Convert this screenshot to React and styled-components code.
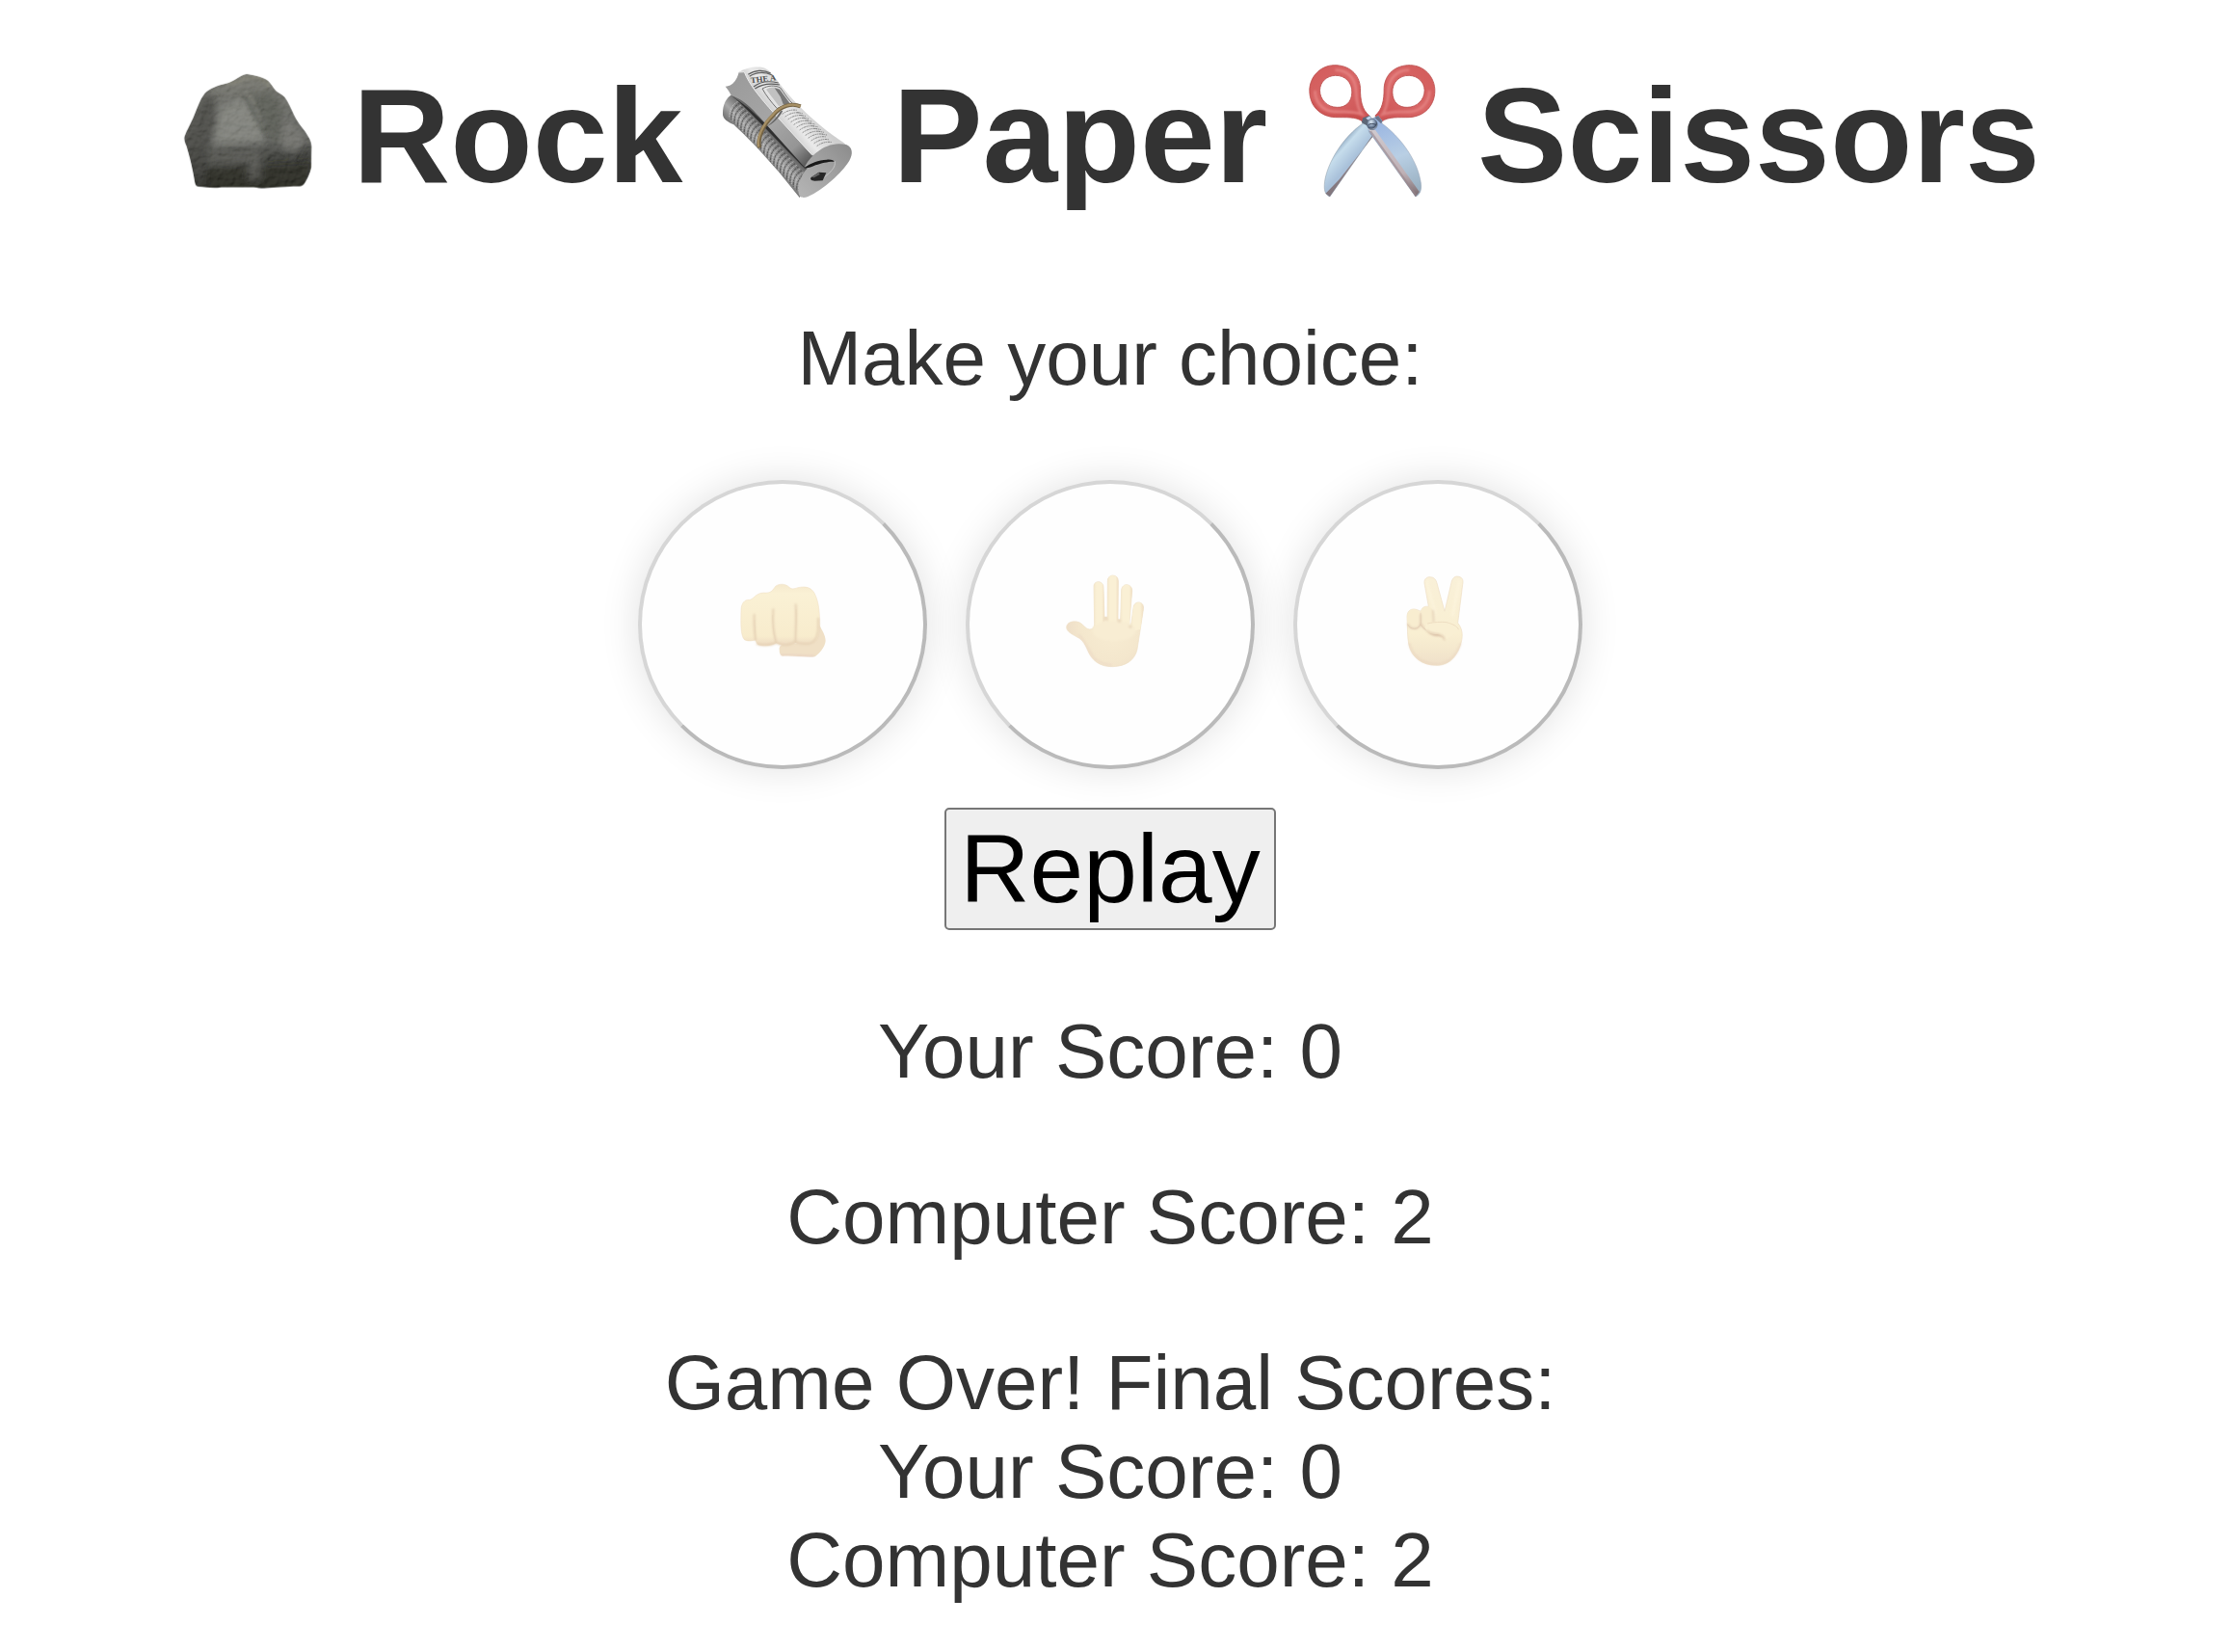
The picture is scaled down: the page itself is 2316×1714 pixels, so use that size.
import React from 'react';
import styled, { createGlobalStyle } from 'styled-components';

const Global = createGlobalStyle`
  body { margin: 0; background: #fff; color: #333; font-family: Arial, "Liberation Sans", sans-serif; }
`;

const Page = styled.main`
  box-sizing: border-box;
  width: 2304px;
  height: 1714px;
  overflow: hidden;
  padding-top: 60px;
  text-align: center;
  font-size: 80px;
  line-height: 92px;
`;

const Title = styled.h1`
  margin: 0 0 105px;
  height: 161px;
  font-size: 140px;
  line-height: 161px;
  white-space: nowrap;
`;

const Emblem = styled.svg`
  width: 140px;
  height: 140px;
  vertical-align: -16px;
  overflow: visible;
`;

const Grain = styled.rect`
  mix-blend-mode: soft-light;
  opacity: 0.3;
`;

const Line = styled.p`
  margin: 0 0 80px;
`;

const Choices = styled.div`
  display: flex;
  justify-content: center;
  gap: 40px;
  margin-bottom: 40px;
`;

const Choice = styled.button`
  display: flex;
  align-items: center;
  justify-content: center;
  box-sizing: border-box;
  width: 300px;
  height: 300px;
  padding: 0;
  border: 4px solid;
  border-color: #d6d6d6 #bababa #bababa #d6d6d6;
  border-radius: 50%;
  background: #fefefe;
  box-shadow: 0 0 40px rgba(0, 0, 0, 0.12);
`;

const Hand = styled.svg`
  width: 120px;
  height: 120px;
`;

const Replay = styled.button`
  display: block;
  box-sizing: border-box;
  width: 344px;
  height: 127px;
  margin: 0 auto 80px;
  padding: 0;
  border: 2px solid #767676;
  border-radius: 5px;
  background: #efefef;
  color: #000;
  font: 100px/115px Arial, "Liberation Sans", sans-serif;
`;

function RockIcon() {
  const outline =
    'M258 80 C275 82 305 88 321 98 C335 108 342 125 352 134 C365 142 376 148 383 160 C394 178 402 200 413 220 C424 240 440 254 449 272 C458 286 462 298 461 312 L460 370 C456 388 447 410 436 424 C430 431 420 431 405 430 L330 435 C310 438 295 435 280 433 L180 433 C150 437 130 432 108 431 C98 430 97 420 95 408 C90 375 80 335 71 305 C66 293 62 283 65 274 C72 255 84 235 92 216 C103 190 112 160 128 140 C145 122 170 115 195 109 C220 103 240 82 258 80Z';
  return (
    <Emblem viewBox="51.6 45 420 420" aria-hidden="true">
      <defs>
        <linearGradient id="rockBase" x1="0" y1="0" x2="0" y2="1">
          <stop offset="0" stopColor="#72726a" />
          <stop offset=".3" stopColor="#646560" />
          <stop offset=".58" stopColor="#585955" />
          <stop offset=".72" stopColor="#3c3d39" />
          <stop offset="1" stopColor="#262723" />
        </linearGradient>
        <filter id="rockSoft" x="-30%" y="-30%" width="160%" height="160%"><feGaussianBlur stdDeviation="11" /></filter>
        <filter id="rockFine" x="-30%" y="-30%" width="160%" height="160%"><feGaussianBlur stdDeviation="4" /></filter>
        <filter id="rockGrain" x="0" y="0" width="100%" height="100%">
          <feTurbulence type="fractalNoise" baseFrequency="0.05 0.06" numOctaves="4" seed="8" />
          <feDiffuseLighting surfaceScale="7" lightingColor="#fff">
            <feDistantLight azimuth="235" elevation="45" />
          </feDiffuseLighting>
        </filter>
        <clipPath id="rockClip"><path d={outline} /></clipPath>
      </defs>
      <g clipPath="url(#rockClip)">
        <path d={outline} fill="url(#rockBase)" />
        <g filter="url(#rockSoft)">
          <path d="M125 140 L55 280 L100 440 L140 430 L132 320 L165 230 L160 150Z" fill="#3a3b36" opacity=".7" />
          <path d="M175 190 L245 155 L295 230 L318 290 L155 300Z" fill="#81827c" opacity=".8" />
          <path d="M262 145 L345 135 L380 230 L365 300 L325 280Z" fill="#52544d" opacity=".75" />
          <path d="M375 210 L455 290 L400 325 L360 300Z" fill="#71726d" opacity=".75" />
          <path d="M140 320 L310 315 L300 355 L140 362Z" fill="#595a56" opacity=".7" />
          <path d="M130 375 L465 350 L450 445 L100 445Z" fill="#22231f" opacity=".65" />
          <path d="M265 355 L305 345 L298 410 L262 408Z" fill="#62635d" opacity=".6" />
        </g>
        <g filter="url(#rockFine)" fill="none" strokeLinecap="round">
          <path d="M243 143 C262 160 270 190 287 215 L318 275" stroke="#3b3d36" strokeWidth="6" opacity=".45" />
          <path d="M254 136 C275 145 290 190 304 218" stroke="#97968a" strokeWidth="5" opacity=".4" />
          <path d="M150 306 C200 300 270 306 325 298" stroke="#80817a" strokeWidth="5" opacity=".35" />
          <path d="M445 292 L412 350 M455 312 L425 365" stroke="#262822" strokeWidth="6" opacity=".5" />
          <path d="M200 112 C240 105 250 92 270 92 C300 90 320 100 330 120" stroke="#8f8e78" strokeWidth="6" opacity=".5" />
        </g>
        <Grain x="51" y="70" width="420" height="380" filter="url(#rockGrain)" />
      </g>
    </Emblem>
  );
}

const sideRows = Array.from({ length: 22 }, (_, i) => i);
const bodyRows = Array.from({ length: 13 }, (_, i) => i);

function NewspaperIcon() {
  return (
    <Emblem viewBox="52 45 420 420" aria-hidden="true">
      <defs>
        <linearGradient id="paperRoll" gradientUnits="userSpaceOnUse" x1="225" y1="235" x2="145" y2="310">
          <stop offset="0" stopColor="#3f3f3f" />
          <stop offset=".3" stopColor="#6a6a6a" />
          <stop offset=".65" stopColor="#a9a9a9" />
          <stop offset="1" stopColor="#6a6a6a" />
        </linearGradient>
        <linearGradient id="paperFlap" gradientUnits="userSpaceOnUse" x1="110" y1="100" x2="340" y2="350">
          <stop offset="0" stopColor="#9c9c9c" />
          <stop offset=".5" stopColor="#a6a6a6" />
          <stop offset=".8" stopColor="#959595" />
          <stop offset="1" stopColor="#555" />
        </linearGradient>
        <linearGradient id="paperFront" gradientUnits="userSpaceOnUse" x1="230" y1="230" x2="310" y2="165">
          <stop offset="0" stopColor="#c9c9c9" />
          <stop offset=".4" stopColor="#eaeaea" />
          <stop offset="1" stopColor="#cfcfcf" />
        </linearGradient>
        <linearGradient id="paperEnd" x1="0" y1="1" x2="1" y2="0">
          <stop offset="0" stopColor="#b5b5b5" />
          <stop offset=".6" stopColor="#9e9e9e" />
          <stop offset="1" stopColor="#8b8b8b" />
        </linearGradient>
        <clipPath id="rollClip"><path d="M90 145 C70 155 60 178 61 208 C64 223 76 229 95 238 L165 300 L292 455 L300 465 L325 380 L120 170Z" /></clipPath>
      </defs>
      <path d="M90 145 C70 155 60 178 61 208 C64 223 76 229 95 238 C130 270 175 315 235 385 L292 455 L300 465 L345 400 L325 370 L120 150Z" fill="url(#paperRoll)" />
      <g clipPath="url(#rollClip)">
        {sideRows.map((i) => (
          <path key={i} d={`M${108 + i * 10.2} ${166 + i * 11} c-18 9 -27 26 -26 50`} fill="none" stroke="#ddd" strokeWidth="3" strokeDasharray="7 2 4 2" opacity=".5" />
        ))}
        {sideRows.map((i) => (
          <path key={i} d={`M${113 + i * 10.2} ${172 + i * 11} c-18 9 -27 26 -26 50`} fill="none" stroke="#383838" strokeWidth="3.5" strokeDasharray="6 2 9 2" opacity=".6" />
        ))}
      </g>
      <path d="M88 147 C150 200 245 305 318 376 L330 362 L140 185Z" fill="#303030" />
      <path d="M111 75 C105 100 90 118 69 119 C76 127 83 138 87 147 C120 158 145 180 175 214 L315 370 L355 325 L205 170 L128 70Z" fill="url(#paperFlap)" />
      <path d="M111 75 C130 62 160 56 185 60 C205 65 216 82 230 100 C270 155 330 215 385 257 C410 276 434 290 447 302 C405 294 366 309 344 336 C305 298 255 240 220 202 C178 155 142 112 128 74Z" fill="url(#paperFront)" />
      <path d="M111 75 L128 74 C142 112 178 155 220 202 L340 334" fill="none" stroke="#ececec" strokeWidth="3" />
      <g fill="none" stroke="#5c5c5c" strokeWidth="3.5">
        <path d="M140 82 C160 68 187 66 210 78 M144 88 C164 75 190 73 215 84" />
        <path d="M157 120 C176 105 205 101 234 108 M161 126 C182 112 207 108 238 114" />
        <path d="M184 126 C202 116 222 114 240 123 C253 141 264 160 281 175 C262 174 245 179 230 188 C212 168 196 148 184 126Z" strokeWidth="2.5" />
      </g>
      <text x="149" y="109" transform="rotate(-7 149 109)" fontFamily="Liberation Serif, serif" fontWeight="700" fontSize="25" textLength="79" lengthAdjust="spacingAndGlyphs" fill="#4c4c4c">THE A</text>
      <path d="M196 128 C213 118 229 120 238 129 L267 174 L235 180Z" fill="#c1c1c1" />
      <path d="M222 124 L238 128 L270 172 L250 176 L240 151Z" fill="#777" />
      <g stroke="#858585" strokeWidth="3" strokeDasharray="6 2 3 2 8 2">
        {bodyRows.map((i) => <path key={i} d={`M${246 + i * 9} ${205 + i * 8.3} q22 -16 46 -12`} fill="none" />)}
        {bodyRows.slice(0, 9).map((i) => <path key={i} d={`M${293 + i * 9.5} ${200 + i * 8.4} l16 3`} fill="none" />)}
      </g>
      <path d="M447 301 C465 309 467 330 455 350 C431 389 374 440 326 462 C313 467 299 467 297 451 C295 427 303 395 324 374 L315 372 C331 335 386 284 447 301Z" fill="url(#paperEnd)" />
      <path d="M314 372 C335 358 358 348 385 347 C398 346 408 349 409 354 C399 351 371 357 350 364 C335 370 322 376 314 372Z" fill="#191919" />
      <path d="M409 351 C416 370 393 390 366 410" fill="none" stroke="#cbcbcb" strokeWidth="2.5" />
      <path d="M336 402 L360 386 L383 388 L372 412 L347 413 C337 412 331 408 336 402Z" fill="#262626" />
      <path d="M338 401 L360 387 L363 393 L345 403Z" fill="#666" />
      <path d="M303 181 C277 169 241 179 218 209 C186 239 169 278 175 310" fill="none" stroke="#746344" strokeWidth="12" />
      <path d="M303 181 C274 169 239 179 215 209 C184 239 167 278 172 307" fill="none" stroke="#a68f64" strokeWidth="7" />
      <path d="M248 194 C236 218 217 235 197 244 C218 230 231 212 241 196Z" fill="#666" />
    </Emblem>
  );
}

function ScissorsIcon() {
  const leftHandle =
    'M133 53 C90 54 56 90 57 134 C58 180 91 213 137 215 C169 216 201 212 222 228 L243 210 C220 191 215 162 215 125 C213 80 179 52 133 53Z M137 85 C168 84 190 107 189 138 C188 168 169 185 143 184 C112 184 89 160 89 131 C90 105 110 86 137 85Z';
  return (
    <Emblem viewBox="42.5 45 420 420" aria-hidden="true">
      <defs>
        <linearGradient id="handleRed" x1="0" y1="0" x2="1" y2="1">
          <stop offset="0" stopColor="#d25b5a" />
          <stop offset=".5" stopColor="#d86666" />
          <stop offset="1" stopColor="#cb5152" />
        </linearGradient>
        <linearGradient id="bladeLeft" gradientUnits="userSpaceOnUse" x1="145" y1="310" x2="190" y2="350">
          <stop offset="0" stopColor="#9eb7cd" />
          <stop offset=".25" stopColor="#c6ddec" />
          <stop offset="1" stopColor="#a9c1da" />
        </linearGradient>
        <linearGradient id="bladeRight" gradientUnits="userSpaceOnUse" x1="300" y1="230" x2="380" y2="440">
          <stop offset="0" stopColor="#9db8e2" />
          <stop offset=".5" stopColor="#b9cfe4" />
          <stop offset="1" stopColor="#9ab1c2" />
        </linearGradient>
        <linearGradient id="bladeEdge" x1="0" y1="0" x2="0" y2="1">
          <stop offset="0" stopColor="#706a70" />
          <stop offset=".5" stopColor="#93868a" />
          <stop offset="1" stopColor="#80757c" />
        </linearGradient>
        <linearGradient id="bladeEdgeLight" x1="0" y1="0" x2="0" y2="1">
          <stop offset="0" stopColor="#d0cacf" />
          <stop offset=".65" stopColor="#bfb1b6" />
          <stop offset="1" stopColor="#77696e" />
        </linearGradient>
        <radialGradient id="rivet" cx=".4" cy=".3" r=".7">
          <stop offset="0" stopColor="#dfebf7" />
          <stop offset=".5" stopColor="#8496af" />
          <stop offset=".8" stopColor="#46546b" />
          <stop offset="1" stopColor="#c2ccda" />
        </radialGradient>
        <filter id="handleGlow" x="-20%" y="-20%" width="140%" height="140%"><feGaussianBlur stdDeviation="3.5" /></filter>
      </defs>
      <path d="M246 225 L255 270 L120 462 C105 456 101 442 104 416 C112 358 160 276 226 232Z" fill="url(#bladeLeft)" stroke="#8d9aa7" strokeWidth="1.5" />
      <path d="M240 258 L254 270 L120 462 L107 452Z M240 258 L107 452 L150 408 L254 275Z" fill="url(#bladeEdge)" />
      <path fillRule="evenodd" d={leftHandle} fill="url(#handleRed)" stroke="#b94b49" strokeWidth="2.5" />
      <path d="M137 68 C176 68 201 94 202 136 C203 169 208 190 220 206 C180 192 157 202 126 197 C92 190 74 162 74 132" fill="none" stroke="#eb9290" strokeWidth="8" opacity=".65" filter="url(#handleGlow)" />
      <path d="M65 164 C80 196 106 209 141 208 C170 208 202 206 221 220" fill="none" stroke="#b6322e" strokeWidth="4" opacity=".55" filter="url(#handleGlow)" />
      <g transform="translate(504 0) scale(-1 1)">
        <path fillRule="evenodd" d={leftHandle} fill="url(#handleRed)" stroke="#b94b49" strokeWidth="2.5" />
        <path d="M137 68 C176 68 201 94 202 136 C203 169 208 190 220 206 C180 192 157 202 126 197 C92 190 74 162 74 132" fill="none" stroke="#eb9290" strokeWidth="8" opacity=".65" filter="url(#handleGlow)" />
      </g>
      <path d="M223 217 L244 209 L254 222 L238 242 L219 232Z" fill="#5c6676" />
      <path d="M232 218 L244 211 L252 221 L242 225Z" fill="#bcd3ec" />
      <path d="M259 216 L271 211 L283 226 L282 234 C335 272 392 345 403 416 C407 440 402 455 387 462 L241 258 L240 224Z" fill="url(#bladeRight)" stroke="#8c9bae" strokeWidth="1.5" />
      <path d="M259 216 L271 211 L283 227 L280 235Z" fill="#69758b" />
      <path d="M239 250 L262 255 L399 447 L387 462Z" fill="url(#bladeEdgeLight)" />
      <path d="M242 258 L387 462 L391 457 L250 258Z" fill="#99878c" opacity=".6" />
      <ellipse cx="252" cy="237" rx="16" ry="17" fill="url(#rivet)" stroke="#586477" strokeWidth="2" />
      <path d="M240 239 C245 234 257 234 265 239" fill="none" stroke="#3c495d" strokeWidth="3" />
    </Emblem>
  );
}

function HandDefs() {
  return (
    <defs>
      <linearGradient id="skin" x1="0" y1="0" x2="0" y2="1">
        <stop offset="0" stopColor="#f9f0d8" />
        <stop offset=".65" stopColor="#f9efd2" />
        <stop offset="1" stopColor="#efe0c9" />
      </linearGradient>
      <linearGradient id="finger" x1="0" y1="0" x2="1" y2="0">
        <stop offset="0" stopColor="#f4e7cb" />
        <stop offset=".25" stopColor="#faf0d5" />
        <stop offset=".75" stopColor="#faf0d5" />
        <stop offset="1" stopColor="#f0dfc4" />
      </linearGradient>
      <linearGradient id="knuckle" x1="0" y1="0" x2="0" y2="1">
        <stop offset="0" stopColor="#f5e9cd" />
        <stop offset=".15" stopColor="#faf1d5" />
        <stop offset=".85" stopColor="#f8eccd" />
        <stop offset="1" stopColor="#ecd9c2" />
      </linearGradient>
      <radialGradient id="palm" cx=".58" cy=".55" r=".6">
        <stop offset="0" stopColor="#f8edd3" />
        <stop offset=".65" stopColor="#f4e7cd" />
        <stop offset="1" stopColor="#eedec8" />
      </radialGradient>
      <filter id="skinBlur" x="-30%" y="-30%" width="160%" height="160%"><feGaussianBlur stdDeviation="3" /></filter>
    </defs>
  );
}

function FistIcon() {
  return (
    <Hand viewBox="36 -6 360 360" aria-hidden="true">
      <HandDefs />
      <path d="M206 252 C204 240 215 233 230 235 L310 227 L330 173 C337 190 350 205 350 225 C348 245 330 265 318 273 C300 278 260 270 216 272 C209 270 206 264 206 252Z" fill="#f0e0c6" />
      <path d="M210 267 C250 266 295 275 315 271" fill="none" stroke="#e6cfc2" strokeWidth="5" opacity=".75" filter="url(#skinBlur)" />
      <path d="M87 130 C87 108 98 96 112 97 C124 98 132 75 158 75 C181 77 184 68 194 55 C205 46 226 46 237 58 C245 66 253 62 264 59 C288 54 305 58 315 76 C328 100 333 135 331 180 C330 214 324 230 303 234 C286 236 270 236 257 230 C246 240 213 240 196 231 C183 240 154 242 139 236 C134 232 134 225 131 222 C120 226 105 226 97 221 C85 207 86 170 87 130Z" fill="url(#knuckle)" stroke="#eedcc0" strokeWidth="1.5" />
      <g fill="none" stroke="#e6d2b6" strokeLinecap="round">
        <g strokeWidth="6" filter="url(#skinBlur)">
          <path d="M128 143 C127 178 129 203 132 222" />
          <path d="M187 127 C185 160 188 202 196 229" />
          <path d="M257 112 C260 144 256 194 256 229" />
          <path d="M327 155 C329 197 326 225 300 233 C279 235 263 232 258 228" />
          <path d="M196 230 C214 240 237 241 253 228" />
          <path d="M137 234 C156 239 180 238 194 231" />
        </g>
        <path d="M129 160 L132 222 M185 145 C186 180 188 205 196 230 M258 127 C261 160 256 195 257 230" strokeWidth="2" opacity=".7" />
      </g>
    </Hand>
  );
}

function PalmIcon() {
  return (
    <Hand viewBox="6 54 360 360" aria-hidden="true">
      <path d="M135 119 C134 107 140 101 149 101 C159 101 165 108 165 119 L168 211 L177 211 L178 98 C178 88 185 81 194 81 C204 81 211 88 211 98 L210 218 L218 219 L221 126 C222 116 229 109 239 110 C249 112 255 119 254 130 L245 240 L250 240 L258 182 C259 170 267 164 277 165 C288 168 291 176 289 188 L270 311 C263 345 234 364 194 365 C154 366 128 346 115 312 C106 291 99 281 83 273 C66 263 49 256 50 241 C52 228 66 223 82 225 C101 228 107 248 122 249 C134 249 137 240 137 229Z" fill="url(#palm)" stroke="#efdfc6" strokeWidth="2" />
      <g fill="url(#finger)">
        <path d="M135 119 Q135 101 149 101 Q165 103 165 119 L168 225 L137 245Z" />
        <path d="M178 98 Q180 81 194 81 Q209 82 211 98 L210 238 L177 238Z" />
        <path d="M221 126 Q225 109 239 110 Q254 113 254 130 L244 245 L217 245Z" />
        <path d="M258 182 Q263 164 277 165 Q291 170 289 188 L280 249 L248 256Z" />
      </g>
      <ellipse cx="198" cy="253" rx="68" ry="32" fill="#f8edd3" filter="url(#skinBlur)" />
      <path d="M168 216 L177 216 M210 223 L218 223 M245 241 L252 240" stroke="#e4d0b6" strokeWidth="7" filter="url(#skinBlur)" />
      <path d="M88 266 C105 278 119 315 134 336 C147 350 168 359 192 360" fill="none" stroke="#e9d4c2" strokeWidth="5" opacity=".65" filter="url(#skinBlur)" />
    </Hand>
  );
}

function VictoryIcon() {
  return (
    <Hand viewBox="6 54 360 360" aria-hidden="true">
      <path d="M144 105 C143 91 152 85 163 86 C175 87 180 94 183 105 L207 193 L229 99 C233 87 241 82 252 85 C263 88 266 97 263 110 L248 229 C261 245 265 265 259 288 C249 327 226 360 184 361 C134 361 105 335 96 299 C90 273 92 240 90 211 C90 192 100 185 114 186 C123 188 130 191 133 193 C136 181 144 176 157 178Z" fill="url(#skin)" stroke="#efdec4" strokeWidth="2" />
      <path d="M153 100 C155 123 172 169 177 198 M253 99 L232 205" stroke="#fdf5de" strokeWidth="9" strokeLinecap="round" fill="none" opacity=".65" filter="url(#skinBlur)" />
      <path d="M90 211 Q92 186 112 186 Q130 188 132 211 L133 228 Q132 248 113 248 Q94 247 91 229Z M132 200 Q134 178 152 178 Q171 180 172 199 L173 231 Q166 250 152 250 Q137 244 133 231Z" fill="#f8edd0" />
      <g fill="none" stroke="#dfc9b1" strokeWidth="4" strokeLinecap="round">
        <path d="M93 233 Q101 251 122 245 Q133 239 132 226 L132 203 M134 232 Q140 248 154 251 M171 190 L173 225" filter="url(#skinBlur)" />
        <path d="M132 198 L133 229 Q128 247 113 247 Q97 246 92 234 M134 236 Q139 246 148 250" strokeWidth="2" />
      </g>
      <path d="M153 253 C171 265 196 253 212 282 C207 273 199 269 177 270 Q160 265 153 253Z" fill="#dcc4aa" filter="url(#skinBlur)" />
      <path d="M154 230 C174 226 196 225 213 227 C233 232 248 240 255 253 L207 283 C204 269 193 264 179 264 C160 263 147 253 146 241 Q146 233 154 230Z" fill="#f9efd3" />
      <path d="M151 252 C165 268 191 259 203 272 L207 283" fill="none" stroke="#dec6ac" strokeWidth="4" filter="url(#skinBlur)" />
      <path d="M153 231 C175 226 196 225 213 227 C232 232 246 239 251 250" fill="none" stroke="#e8d5b9" strokeWidth="2" />
      <path d="M97 291 C105 328 132 356 182 357 C218 358 245 330 257 291" fill="none" stroke="#e9d4be" strokeWidth="5" opacity=".7" filter="url(#skinBlur)" />
    </Hand>
  );
}

export default function App() {
  return (
    <>
      <Global />
      <Page>
        <Title>
          <RockIcon /> Rock <NewspaperIcon /> Paper <ScissorsIcon /> Scissors
        </Title>
        <Line>Make your choice:</Line>
        <Choices>
          <Choice aria-label="Rock"><FistIcon /></Choice>
          <Choice aria-label="Paper"><PalmIcon /></Choice>
          <Choice aria-label="Scissors"><VictoryIcon /></Choice>
        </Choices>
        <Replay>Replay</Replay>
        <Line>Your Score: 0</Line>
        <Line>Computer Score: 2</Line>
        <Line>
          Game Over! Final Scores:<br />Your Score: 0<br />Computer Score: 2
        </Line>
      </Page>
    </>
  );
}
